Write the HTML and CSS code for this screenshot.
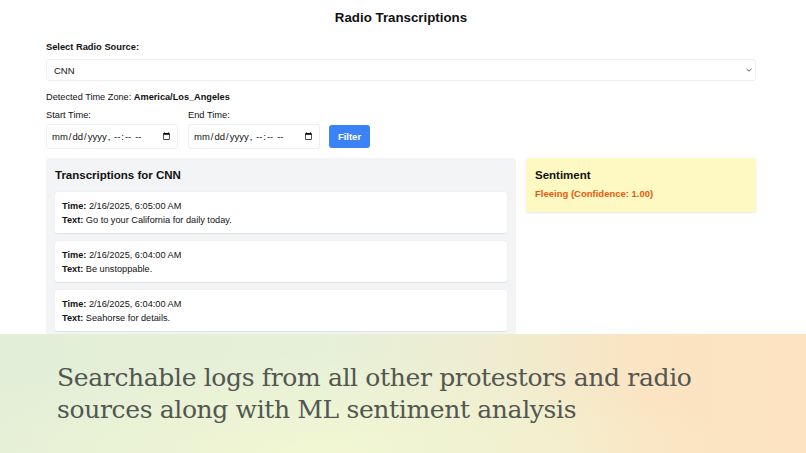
FILE: index.html
```html
<!DOCTYPE html>
<html lang="en">
<head>
<meta charset="utf-8">
<title>Radio Transcriptions</title>
<link rel="stylesheet" href="styles.css">
</head>
<body>
<div class="page">
  <h1 class="title">Radio Transcriptions</h1>
  <label class="label">Select Radio Source:</label>
  <div class="select">
    <span>CNN</span>
    <svg class="chev" width="8" height="6" viewBox="0 0 8 6"><path d="M1.5 1.8 L4 4.2 L6.5 1.8" fill="none" stroke="#666" stroke-width="1"/></svg>
  </div>
  <div class="tz">Detected Time Zone: <b>America/Los_Angeles</b></div>
  <div class="filters">
    <div class="field">
      <div class="flabel">Start Time:</div>
      <input class="dt" type="datetime-local">
    </div>
    <div class="field">
      <div class="flabel">End Time:</div>
      <input class="dt" type="datetime-local">
    </div>
    <button class="btn">Filter</button>
  </div>
  <div class="grid">
    <section class="panel">
      <h2 class="ptitle">Transcriptions for CNN</h2>
      <div class="cards">
        <div class="card"><div><b>Time:</b> 2/16/2025, 6:05:00 AM</div><div><b>Text:</b> Go to your California for daily today.</div></div>
        <div class="card"><div><b>Time:</b> 2/16/2025, 6:04:00 AM</div><div><b>Text:</b> Be unstoppable.</div></div>
        <div class="card"><div><b>Time:</b> 2/16/2025, 6:04:00 AM</div><div><b>Text:</b> Seahorse for details.</div></div>
        <div class="card"><div><b>Time:</b> 2/16/2025, 6:03:00 AM</div><div><b>Text:</b> Stay tuned.</div></div>
      </div>
    </section>
    <aside class="sent">
      <h2 class="ptitle">Sentiment</h2>
      <div class="sval">Fleeing (Confidence: 1.00)</div>
    </aside>
  </div>
</div>
<div class="caption">
  <p>Searchable logs from all other protestors and radio sources along with ML sentiment analysis</p>
</div>
</body>
</html>
```
FILE: styles.css
```css
* { box-sizing: border-box; }
html, body { margin: 0; height: 100%; overflow: hidden; }
body {
  font-family: "Liberation Sans", Arial, sans-serif;
  color: #111;
  background: #fff;
  position: relative;
  width: 806px;
  height: 453px;
}
.page {
  width: 710px;
  margin-left: 46px;
  padding-top: 10px;
}
.title {
  margin: 0 0 15px;
  text-align: center;
  font-size: 13.3px;
  font-weight: 700;
  line-height: 16px;
}
.label {
  display: block;
  font-size: 9.3px;
  font-weight: 700;
  line-height: 12px;
  margin-bottom: 6px;
}
.select {
  height: 22px;
  border: 1px solid #eceef1;
  border-radius: 3px;
  display: flex;
  align-items: center;
  justify-content: space-between;
  padding: 0 2px 0 7px;
  font-size: 9.5px;
}
.tz {
  font-size: 9.2px;
  line-height: 12px;
  margin-top: 10px;
}
.filters {
  display: flex;
  align-items: flex-end;
  gap: 10px;
  margin-top: 6px;
}
.field { display: flex; flex-direction: column; gap: 3px; }
.flabel { font-size: 9.3px; line-height: 12px; }
.dt {
  width: 132px;
  height: 25px;
  border: 1px solid #eceef1;
  border-radius: 3px;
  font-family: "Liberation Sans", Arial, sans-serif;
  font-size: 9.5px;
  padding: 0 4px;
  color: #111;
  background: #fff;
}
.btn {
  margin-left: -1px;
  margin-bottom: 1px;
  width: 41px;
  height: 23px;
  border: 0;
  border-radius: 3px;
  background: #3b82f6;
  color: #fff;
  font-family: "Liberation Sans", Arial, sans-serif;
  font-size: 9.5px;
  font-weight: 700;
}
.grid {
  display: grid;
  grid-template-columns: 470px 1fr;
  gap: 10px;
  margin-top: 9px;
  align-items: start;
}
.panel {
  background: #f3f4f6;
  border-radius: 4px;
  padding: 9px;
  height: 260px;
}
.ptitle {
  margin: 0;
  font-size: 11.5px;
  font-weight: 700;
  line-height: 14px;
  padding-top: 1px;
}
.cards {
  display: flex;
  flex-direction: column;
  gap: 8px;
  margin-top: 10px;
}
.card {
  background: #fff;
  border-radius: 3px;
  box-shadow: 0 0.5px 1.5px rgba(0,0,0,0.08);
  padding: 7px;
  height: 41px;
  font-size: 9.2px;
  line-height: 14px;
}
.sent {
  background: #fef9c3;
  border-radius: 3px;
  box-shadow: 0 1px 2px rgba(0,0,0,0.1);
  padding: 9px 9px 12px;
}
.sval {
  margin-top: 6px;
  color: #ea580c;
  font-size: 9.5px;
  font-weight: 700;
  line-height: 12px;
}
.caption {
  position: absolute;
  left: 0;
  right: 0;
  top: 334px;
  bottom: 0;
  background:
    radial-gradient(ellipse at 40% 100%, rgba(243,247,210,0.9), rgba(243,247,210,0) 60%),
    linear-gradient(90deg, #e3eed8 0%, #e6f0d8 40%, #efecd0 62%, #fbe4c2 80%, #fde3c2 100%);
  padding: 28px 57px 0;
}
.caption p {
  margin: 0;
  font-family: "DejaVu Serif", "Liberation Serif", serif;
  font-size: 25px;
  line-height: 32px;
  color: #525752;
  width: 680px;
  letter-spacing: -0.35px;
}
```
